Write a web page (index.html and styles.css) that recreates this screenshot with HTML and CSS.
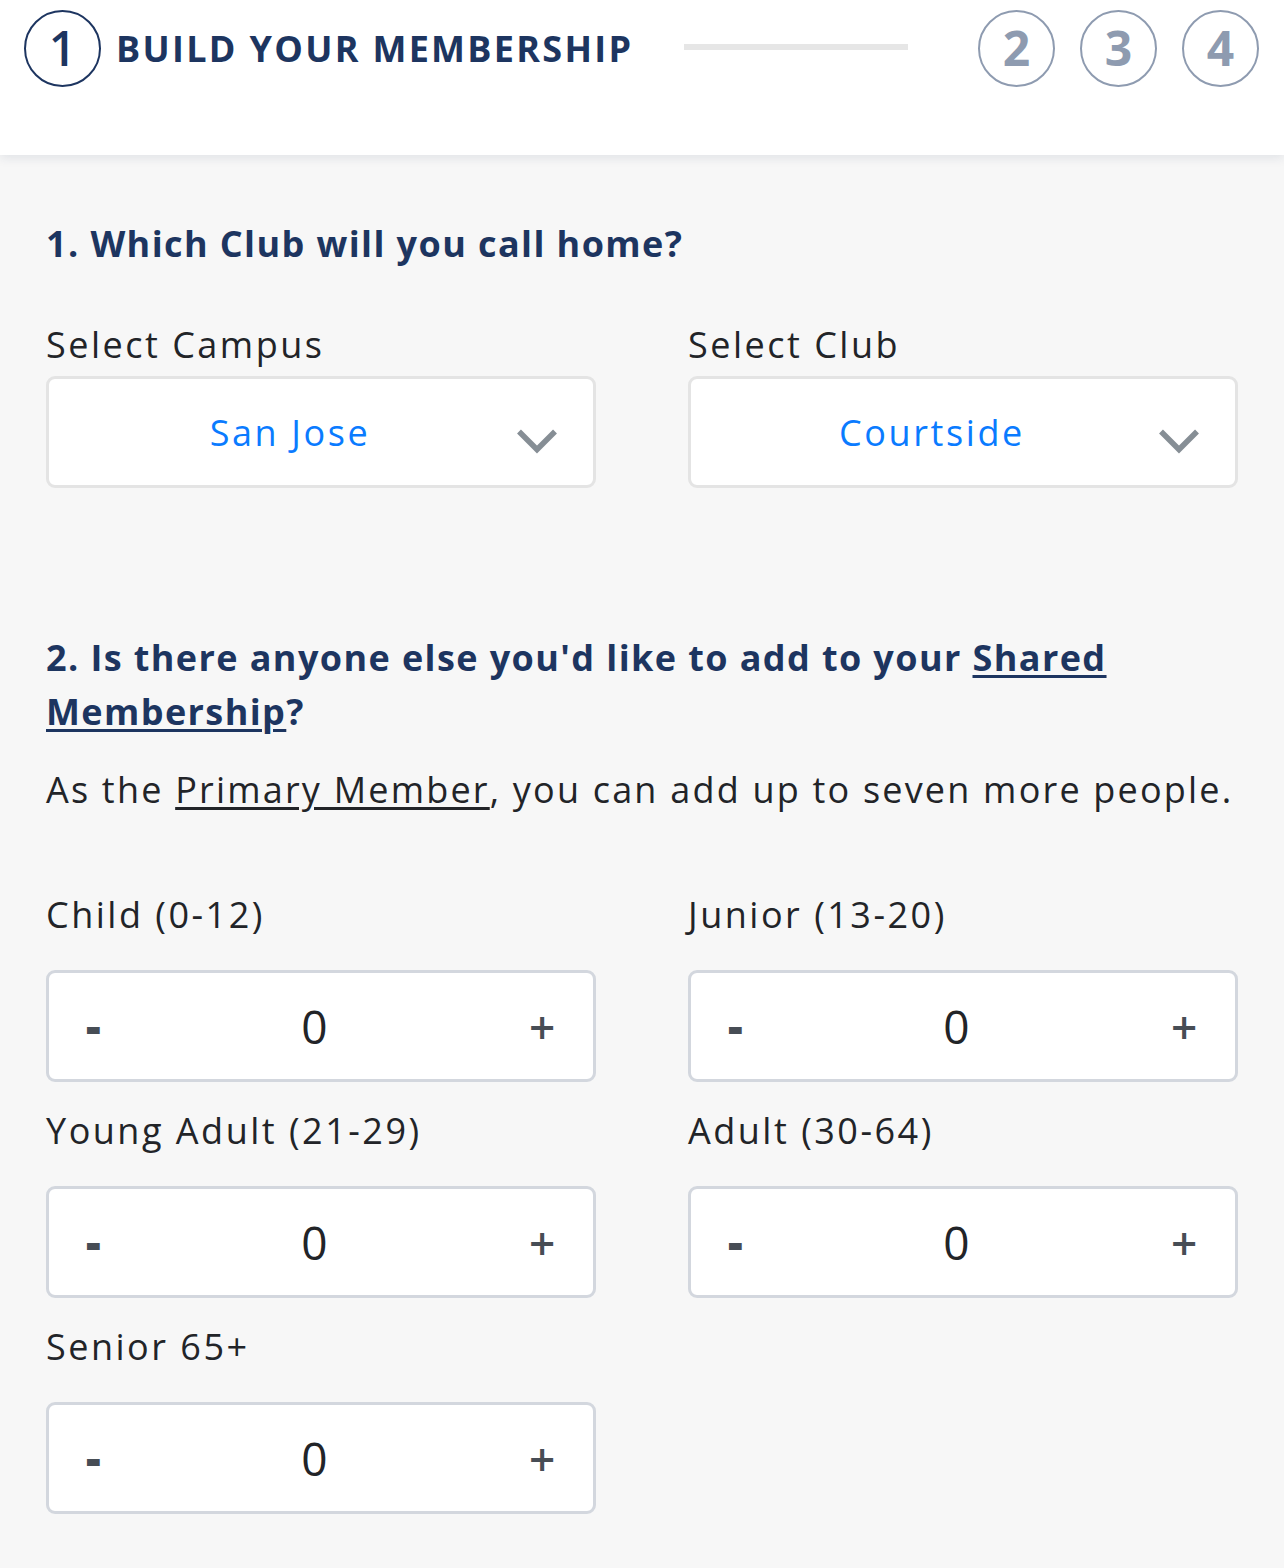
FILE: index.html
```html
<!DOCTYPE html>
<html lang="en">
<head>
<meta charset="utf-8">
<title>Build your membership</title>
<link rel="stylesheet" href="styles.css">
</head>
<body>
<header class="progress">
  <div class="step step-active">
    <span class="step-circle">1</span>
    <span class="step-title">BUILD YOUR MEMBERSHIP</span>
  </div>
  <div class="step-line"></div>
  <div class="step-rest">
    <span class="step-circle step-circle-muted">2</span>
    <span class="step-circle step-circle-muted">3</span>
    <span class="step-circle step-circle-muted">4</span>
  </div>
</header>

<main class="content">
  <section class="block block-club">
    <h2 class="question">1. Which Club will you call home?</h2>
    <div class="grid">
      <div class="field">
        <label class="field-label">Select Campus</label>
        <div class="select">
          <span class="select-value">San Jose</span>
          <svg class="chevron" width="42" height="26" viewBox="0 0 42 26"><path d="M3 3.5 L21 21.5 L39 3.5" fill="none" stroke="#868e95" stroke-width="5.5"/></svg>
        </div>
      </div>
      <div class="field">
        <label class="field-label">Select Club</label>
        <div class="select">
          <span class="select-value">Courtside</span>
          <svg class="chevron" width="42" height="26" viewBox="0 0 42 26"><path d="M3 3.5 L21 21.5 L39 3.5" fill="none" stroke="#868e95" stroke-width="5.5"/></svg>
        </div>
      </div>
    </div>
  </section>

  <section class="block block-members">
    <h2 class="question">2. Is there anyone else you'd like to add to your <a class="q-link" href="#">Shared</a> <a class="q-link" href="#">Membership</a>?</h2>
    <p class="intro">As the <a class="intro-link" href="#">Primary Member</a>, you can add up to seven more people.</p>
    <div class="grid grid-steppers">
      <div class="field">
        <label class="field-label">Child (0-12)</label>
        <div class="stepper"><span class="btn btn-minus">-</span><span class="count">0</span><span class="btn btn-plus">+</span></div>
      </div>
      <div class="field">
        <label class="field-label">Junior (13-20)</label>
        <div class="stepper"><span class="btn btn-minus">-</span><span class="count">0</span><span class="btn btn-plus">+</span></div>
      </div>
      <div class="field">
        <label class="field-label">Young Adult (21-29)</label>
        <div class="stepper"><span class="btn btn-minus">-</span><span class="count">0</span><span class="btn btn-plus">+</span></div>
      </div>
      <div class="field">
        <label class="field-label">Adult (30-64)</label>
        <div class="stepper"><span class="btn btn-minus">-</span><span class="count">0</span><span class="btn btn-plus">+</span></div>
      </div>
      <div class="field">
        <label class="field-label">Senior 65+</label>
        <div class="stepper"><span class="btn btn-minus">-</span><span class="count">0</span><span class="btn btn-plus">+</span></div>
      </div>
    </div>
  </section>
</main>
</body>
</html>
```

FILE: styles.css
```css
* { box-sizing: border-box; }

html, body {
  margin: 0;
  padding: 0;
  background: #f7f7f7;
  font-family: "Open Sans", "Noto Sans", sans-serif;
  color: #222428;
}

/* ---------- progress header ---------- */
.progress {
  height: 155px;
  background: #ffffff;
  box-shadow: 0 3px 10px rgba(30, 50, 90, 0.10);
  display: flex;
  align-items: flex-start;
  padding: 10px 25px 0 24px;
  position: relative;
}

.step {
  display: flex;
  align-items: center;
  height: 77px;
}

.step-circle {
  width: 77px;
  height: 77px;
  border: 2.5px solid #1d3560;
  border-radius: 50%;
  display: flex;
  align-items: center;
  justify-content: center;
  font-size: 48px;
  font-weight: 600;
  color: #1d3560;
  line-height: 1;
  flex: none;
  padding-bottom: 2px;
}

.step-circle-muted {
  border-color: #8e9bb0;
  color: #8e9bb0;
  font-weight: 700;
}

.step-title {
  margin-left: 15px;
  font-size: 36px;
  font-weight: 700;
  color: #1d3560;
  letter-spacing: 2.3px;
  white-space: nowrap;
}

.step-line {
  width: 224px;
  height: 6px;
  background: #e6e6e6;
  margin-top: 34px;
  margin-left: 51px;
}

.step-rest {
  margin-left: auto;
  display: flex;
  gap: 25px;
}

/* ---------- content ---------- */
.content {
  padding: 0 46px 40px;
}

.block-club {
  padding-top: 62px;
}

.block-members {
  padding-top: 143px;
}

.question {
  margin: 0;
  font-size: 36px;
  font-weight: 700;
  color: #1d3560;
  line-height: 54px;
  letter-spacing: 1.4px;
}

.grid {
  display: grid;
  grid-template-columns: 1fr 1fr;
  column-gap: 92px;
}

.block-club .grid {
  margin-top: 52px;
}

.field-label {
  display: block;
  font-size: 36px;
  line-height: 44px;
  letter-spacing: 2.5px;
  color: #222428;
  margin-bottom: 9px;
}

.select {
  height: 112px;
  background: #ffffff;
  border: 3px solid #e4e4e4;
  border-radius: 9px;
  display: flex;
  align-items: center;
  padding: 0 35px 0 15px;
}

.select-value {
  flex: 1;
  text-align: center;
  font-size: 36px;
  letter-spacing: 2.6px;
  color: #0a7bff;
}

.chevron {
  flex: none;
  margin-top: 17px;
}

.q-link {
  color: #1d3560;
  text-decoration: underline;
  text-underline-offset: 4px;
  text-decoration-thickness: 3px;
}

.intro {
  margin: 26px 0 0;
  font-size: 36px;
  line-height: 50px;
  letter-spacing: 2.2px;
  color: #222428;
}

.intro-link {
  color: #222428;
  text-decoration: underline;
  text-underline-offset: 4px;
  text-decoration-thickness: 2.5px;
}

.grid-steppers {
  margin-top: 78px;
  row-gap: 27px;
}

.grid-steppers .field-label {
  margin-bottom: 33px;
}

.stepper {
  height: 112px;
  background: #ffffff;
  border: 3px solid #d3d7de;
  border-radius: 9px;
  display: flex;
  align-items: center;
  justify-content: space-between;
  padding: 0 38px 0 37px;
}

.btn {
  width: 26px;
  font-size: 46px;
  color: #474d55;
  line-height: 1;
}

.btn-minus {
  text-align: left;
  font-weight: 800;
  padding-bottom: 2px;
}

.btn-plus {
  text-align: right;
  font-weight: 600;
}

.count {
  font-size: 46px;
  color: #222428;
  line-height: 1;
  padding-right: 12px;
}
```
